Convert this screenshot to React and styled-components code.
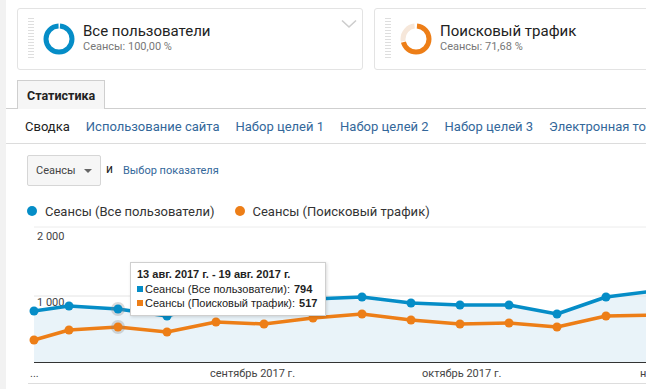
import React from "react";
import styled, { createGlobalStyle } from "styled-components";

const Global = createGlobalStyle`
  html, body { margin: 0; padding: 0; background: #fff; overflow: hidden; }
  body { font-family: Roboto, "Noto Sans", Arial, sans-serif; color: #222; }
  * { box-sizing: border-box; }
`;

const BLUE = "#058dc7";
const ORANGE = "#ed7e17";
const LINK = "#33679a";

const Page = styled.div`
  display: flex;
  width: 646px;
  height: 389px;
  overflow: hidden;
`;
const Strip = styled.div`
  flex: 0 0 6px;
  background: #f2f2f2;
`;
const Main = styled.div`
  flex: 1;
  min-width: 0;
  overflow: hidden;
`;
const CardsRow = styled.div`
  display: flex;
  gap: 11px;
  padding: 8px 0 0 11px;
`;
const Card = styled.div`
  position: relative;
  flex: 0 0 ${(p) => p.$w}px;
  height: 62px;
  border: 1px solid #e3e3e3;
  border-radius: 3px;
  display: flex;
  align-items: center;
  padding-left: 10px;
`;
const Handle = styled.div`
  width: 6px;
  height: 42px;
  margin-right: 9px;
  background: repeating-linear-gradient(to bottom, #dedede 0 1px, transparent 1px 3px);
`;
const CardText = styled.div`
  display: flex;
  flex-direction: column;
  margin-left: 8px;
  margin-top: -3px;
`;
const CardTitle = styled.div`
  font-size: 15px;
  line-height: 18px;
  color: #222;
`;
const CardSub = styled.div`
  font-size: 11px;
  line-height: 14px;
  color: #777;
`;
const Chevron = styled.svg`
  position: absolute;
  top: 10px;
  right: 5px;
`;

const TabBar = styled.div`
  display: flex;
  margin-top: 10px;
  padding-left: 11px;
  border-bottom: 1px solid #cfcfcf;
`;
const Tab = styled.div`
  height: 29px;
  margin-bottom: -1px;
  padding: 0 9px;
  display: flex;
  align-items: center;
  border: 1px solid #cfcfcf;
  border-bottom: none;
  background: #f6f6f6;
  font-size: 12.5px;
  font-weight: 700;
  color: #222;
`;
const Nav = styled.div`
  display: flex;
  align-items: center;
  gap: 16px;
  height: 35px;
  padding-left: 19px;
  border-bottom: 1px solid #dcdcdc;
  white-space: nowrap;
  overflow: hidden;
`;
const NavItem = styled.span`
  font-size: 13px;
  color: ${(p) => (p.$active ? "#222" : LINK)};
`;
const Controls = styled.div`
  display: flex;
  align-items: center;
  margin-top: 11px;
  padding-left: 21px;
  height: 31px;
`;
const Select = styled.div`
  width: 74px;
  height: 31px;
  border: 1px solid #d6d6d6;
  border-radius: 2px;
  background: #f6f6f6;
  display: flex;
  align-items: center;
  justify-content: space-between;
  padding: 0 8px 0 8px;
  font-size: 11px;
  color: #444;
`;
const Arrow = styled.span`
  width: 0;
  height: 0;
  border-left: 4px solid transparent;
  border-right: 4px solid transparent;
  border-top: 4px solid #666;
`;
const And = styled.span`
  margin-left: 5px;
  font-size: 12px;
  color: #222;
  margin-top: -3px;
`;
const Link = styled.span`
  margin-left: 10px;
  font-size: 11px;
  color: ${LINK};
`;
const Legend = styled.div`
  display: flex;
  align-items: center;
  gap: 20px;
  margin-top: 17px;
  padding-left: 21px;
  height: 16px;
`;
const LegendItem = styled.div`
  display: flex;
  align-items: center;
  gap: 8px;
  font-size: 13px;
  color: #333;
`;
const Dot = styled.span`
  width: 10px;
  height: 10px;
  border-radius: 50%;
  background: ${(p) => p.$c};
`;
const ChartWrap = styled.div`
  position: relative;
  margin-top: 3px;
  height: 167px;
`;
const Tooltip = styled.div`
  position: absolute;
  left: 124px;
  top: 40px;
  width: 196px;
  height: 54px;
  background: #fff;
  border: 1px solid #cfcfcf;
  box-shadow: 1px 1px 3px rgba(0, 0, 0, 0.15);
  padding: 4px 6px;
  font-family: "Liberation Sans", Arial, sans-serif;
  font-size: 11px;
  line-height: 14.5px;
  color: #222;
  white-space: nowrap;
`;
const TipHead = styled.div`
  font-weight: 700;
`;
const TipRow = styled.div`
  display: flex;
  align-items: center;
  b { margin-left: 4px; }
`;
const Square = styled.span`
  flex: 0 0 6px;
  width: 6px;
  height: 6px;
  background: ${(p) => p.$c};
  margin-right: 2px;
`;

function Donut({ pct, color, rest }) {
  const r = 13;
  const c = 2 * Math.PI * r;
  const gap = 2;
  const main = Math.max(0, (c * pct) / 100 - gap);
  const restLen = c - main - gap * 2;
  return (
    <svg width="32" height="32" viewBox="0 0 32 32">
      {rest && (
        <circle cx="16" cy="16" r={r} fill="none" stroke={rest} strokeWidth="5"
          strokeDasharray={`0 ${main + gap} ${restLen} ${c}`} transform="rotate(-90 16 16)" />
      )}
      <circle cx="16" cy="16" r={r} fill="none" stroke={color} strokeWidth="5"
        strokeDasharray={`${main} ${c}`} strokeDashoffset={-gap / 2} transform="rotate(-90 16 16)" />
    </svg>
  );
}

const blue = [[34,311],[69,306],[118,309],[167,316],[216,302],[264,301],[313,299],[362,297],[411,303],[460,305],[509,305],[557,314],[606,297],[655,291]];
const orange = [[34,340],[69,330],[118,327],[167,332],[216,322],[264,324],[313,318],[362,314],[411,320],[460,324],[509,323],[557,327],[606,316],[655,315]];

function Chart() {
  const ox = 6, oy = 222;
  const pts = (a) => a.map(([x, y]) => `${x - ox},${y - oy}`).join(" ");
  const area = `${34 - ox},${362 - oy} ${pts(blue)} ${655 - ox},${362 - oy}`;
  return (
    <svg width="640" height="167" viewBox="0 0 640 167" style={{ display: "block" }}>
      <line x1={28} y1={5} x2={640} y2={5} stroke="#ececec" />
      <polygon points={area} fill="#e9f3f9" />
      <line x1={28} y1={74} x2={640} y2={74} stroke="#e4e4e4" />
      <line x1={28} y1={140.5} x2={640} y2={140.5} stroke="#333" />
      <line x1={22} y1={161.5} x2={640} y2={161.5} stroke="#ddd" />
      <g fontFamily="Roboto, Arial, sans-serif" fontSize="11" fill="#444">
        <text x={31} y={18}>2 000</text>
        <text x={31} y={84}>1 000</text>
        <text x={24} y={155}>...</text>
        <text x={204} y={155}>сентябрь 2017 г.</text>
        <text x={416} y={155}>октябрь 2017 г.</text>
        <text x={634} y={155}>н</text>
      </g>
      <polyline points={pts(blue)} fill="none" stroke={BLUE} strokeWidth="3.5" strokeLinejoin="round" />
      <polyline points={pts(orange)} fill="none" stroke={ORANGE} strokeWidth="3.5" strokeLinejoin="round" />
      <circle cx={118 - ox} cy={309 - oy} r="7" fill="#888" opacity="0.3" />
      <circle cx={118 - ox} cy={327 - oy} r="7" fill="#888" opacity="0.3" />
      {blue.map(([x, y], i) => (
        <circle key={"b" + i} cx={x - ox} cy={y - oy} r="4.5" fill={BLUE} />
      ))}
      {orange.map(([x, y], i) => (
        <circle key={"o" + i} cx={x - ox} cy={y - oy} r="4.5" fill={ORANGE} />
      ))}
    </svg>
  );
}

export default function App() {
  return (
    <>
      <Global />
      <Page>
        <Strip />
        <Main>
          <CardsRow>
            <Card $w={346}>
              <Handle />
              <Donut pct={100} color={BLUE} />
              <CardText>
                <CardTitle>Все пользователи</CardTitle>
                <CardSub>Сеансы: 100,00 %</CardSub>
              </CardText>
              <Chevron width="16" height="10" viewBox="0 0 16 10">
                <path d="M1 1.5 L8 8 L15 1.5" fill="none" stroke="#cdcdcd" strokeWidth="1.6" />
              </Chevron>
            </Card>
            <Card $w={300}>
              <Handle />
              <Donut pct={71.68} color={ORANGE} rest="#f6e7da" />
              <CardText>
                <CardTitle>Поисковый трафик</CardTitle>
                <CardSub>Сеансы: 71,68 %</CardSub>
              </CardText>
            </Card>
          </CardsRow>
          <TabBar>
            <Tab>Статистика</Tab>
          </TabBar>
          <Nav>
            <NavItem $active>Сводка</NavItem>
            <NavItem>Использование сайта</NavItem>
            <NavItem>Набор целей 1</NavItem>
            <NavItem>Набор целей 2</NavItem>
            <NavItem>Набор целей 3</NavItem>
            <NavItem>Электронная торговля</NavItem>
          </Nav>
          <Controls>
            <Select>
              Сеансы
              <Arrow />
            </Select>
            <And>и</And>
            <Link>Выбор показателя</Link>
          </Controls>
          <Legend>
            <LegendItem><Dot $c={BLUE} />Сеансы (Все пользователи)</LegendItem>
            <LegendItem><Dot $c={ORANGE} />Сеансы (Поисковый трафик)</LegendItem>
          </Legend>
          <ChartWrap>
            <Chart />
            <Tooltip>
              <TipHead>13 авг. 2017 г. - 19 авг. 2017 г.</TipHead>
              <TipRow><Square $c={BLUE} />Сеансы (Все пользователи):<b>794</b></TipRow>
              <TipRow><Square $c={ORANGE} />Сеансы (Поисковый трафик):<b>517</b></TipRow>
            </Tooltip>
          </ChartWrap>
        </Main>
      </Page>
    </>
  );
}
